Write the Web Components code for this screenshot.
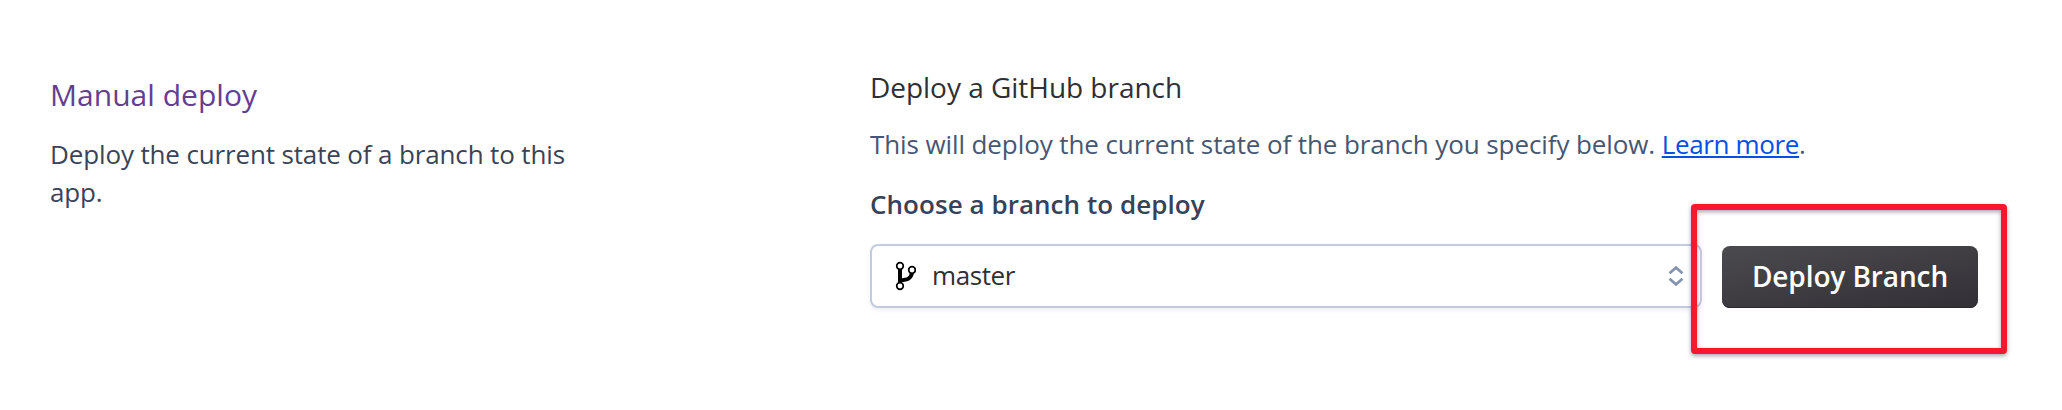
<!DOCTYPE html>
<html lang="en">
<head>
<meta charset="utf-8">
<title>Manual deploy</title>
<style>
html, body { margin: 0; background: #fff; }
body { height: 410px; overflow: hidden; font-family: "Open Sans", "Noto Sans", sans-serif; }
</style>
</head>
<body>
<deploy-section>
  <section-intro slot="intro">
    <span slot="title">Manual deploy</span>
    Deploy the current state of a branch to this app.
  </section-intro>
  <deploy-form>
    <span slot="heading">Deploy a GitHub branch</span>
    <span slot="label">Choose a branch to deploy</span>
    <branch-select slot="controls">master</branch-select>
    <highlight-frame slot="controls"><deploy-button>Deploy Branch</deploy-button></highlight-frame>
  </deploy-form>
</deploy-section>
<script>
const define = (name, html) => customElements.define(name, class extends HTMLElement {
  constructor() {
    super();
    this.attachShadow({ mode: 'open' }).innerHTML = html;
  }
});

define('deploy-section', `
<style>
:host { display: grid; grid-template-columns: 820px 1108px; padding: 68px 0 0 50px; box-sizing: border-box; }
</style>
<slot name="intro"></slot><slot></slot>`);

define('section-intro', `
<style>
:host { display: block; padding-top: 7px; width: 540px; }
h2 { margin: 0 0 20px; font-size: 30px; line-height: 40px; font-weight: 400; color: #643f8f; letter-spacing: .03px; }
p { margin: 0; font-size: 26px; line-height: 38px; color: #394459; letter-spacing: -.14px; }
</style>
<h2><slot name="title"></slot></h2><p><slot></slot></p>`);

define('deploy-form', `
<style>
:host { display: block; }
h3 { margin: 0 0 19px; font-size: 28px; line-height: 38px; font-weight: 400; color: #2f2f34; letter-spacing: -.03px; }
p { margin: 0 0 22px; font-size: 26px; line-height: 38px; color: #475772; letter-spacing: -.1px; white-space: nowrap; }
a { color: #0050e6; letter-spacing: -.35px; text-decoration: underline; text-decoration-thickness: 2px; text-underline-offset: 2px; text-decoration-skip-ink: none; }
label { display: block; font-size: 26px; line-height: 38px; font-weight: 600; color: #37425a; letter-spacing: .05px; }
.row { display: flex; gap: 20px; margin-top: 21px; align-items: flex-end; }
</style>
<h3><slot name="heading"></slot></h3>
<p>This will deploy the current state of the branch you specify below. <a>Learn more</a>.</p>
<label><slot name="label"></slot></label>
<div class="row"><slot name="controls"></slot></div>`);

define('branch-select', `
<style>
:host { display: flex; align-items: center; box-sizing: border-box; width: 832px; height: 64px; padding: 0 16px 0 22px;
  border: 2px solid #c2cbe2; border-radius: 8px; background: #fff; box-shadow: 0 2px 4px rgba(60,70,110,.09); }
span { flex: 1; margin-left: 16px; padding-bottom: 2px; font-size: 26px; line-height: 38px; color: #2f2f34; letter-spacing: -.4px; }
svg { display: block; flex: none; }
</style>
<svg width="22" height="30" viewBox="0 0 22 30">
  <path d="M6 7V22" fill="none" stroke="#000" stroke-width="4"/>
  <path d="M18 10C18 17.5 13.5 19 6 19.3" fill="none" stroke="#000" stroke-width="4"/>
  <g fill="#fff" stroke="#000" stroke-width="1.7"><circle cx="6" cy="5" r="3.3"/><circle cx="6" cy="25" r="3.3"/><circle cx="18" cy="9" r="3.3"/></g>
</svg>
<span><slot></slot></span>
<svg width="16" height="22" viewBox="0 0 16 22" fill="none" stroke="#8494ae" stroke-width="2.8"><path d="M1.5 8.2L8 2.7L14.5 8.2M1.5 13.8L8 19.3L14.5 13.8"/></svg>`);

define('deploy-button', `
<style>
:host { display: block; }
button { display: block; box-sizing: border-box; width: 256px; height: 62px; margin: 0; padding: 0 0 2px; border: 0; border-radius: 8px;
  background: linear-gradient(170deg, #4b4a4e, #323036); box-shadow: inset 0 -1px 0 #2b292f;
  color: #fff; font: 600 28px/38px "Open Sans", "Noto Sans", sans-serif; letter-spacing: -.1px; white-space: nowrap; }
</style>
<button type="button"><slot></slot></button>`);

define('highlight-frame', `
<style>
:host { display: block; position: relative; }
div { position: absolute; inset: -42px -29px -46px -31px; border: 6px solid #f7172f; border-radius: 4px; pointer-events: none;
  filter: drop-shadow(0 2px 2px rgba(0,0,0,.35)); }
</style>
<slot></slot><div></div>`);
</script>
</body>
</html>
